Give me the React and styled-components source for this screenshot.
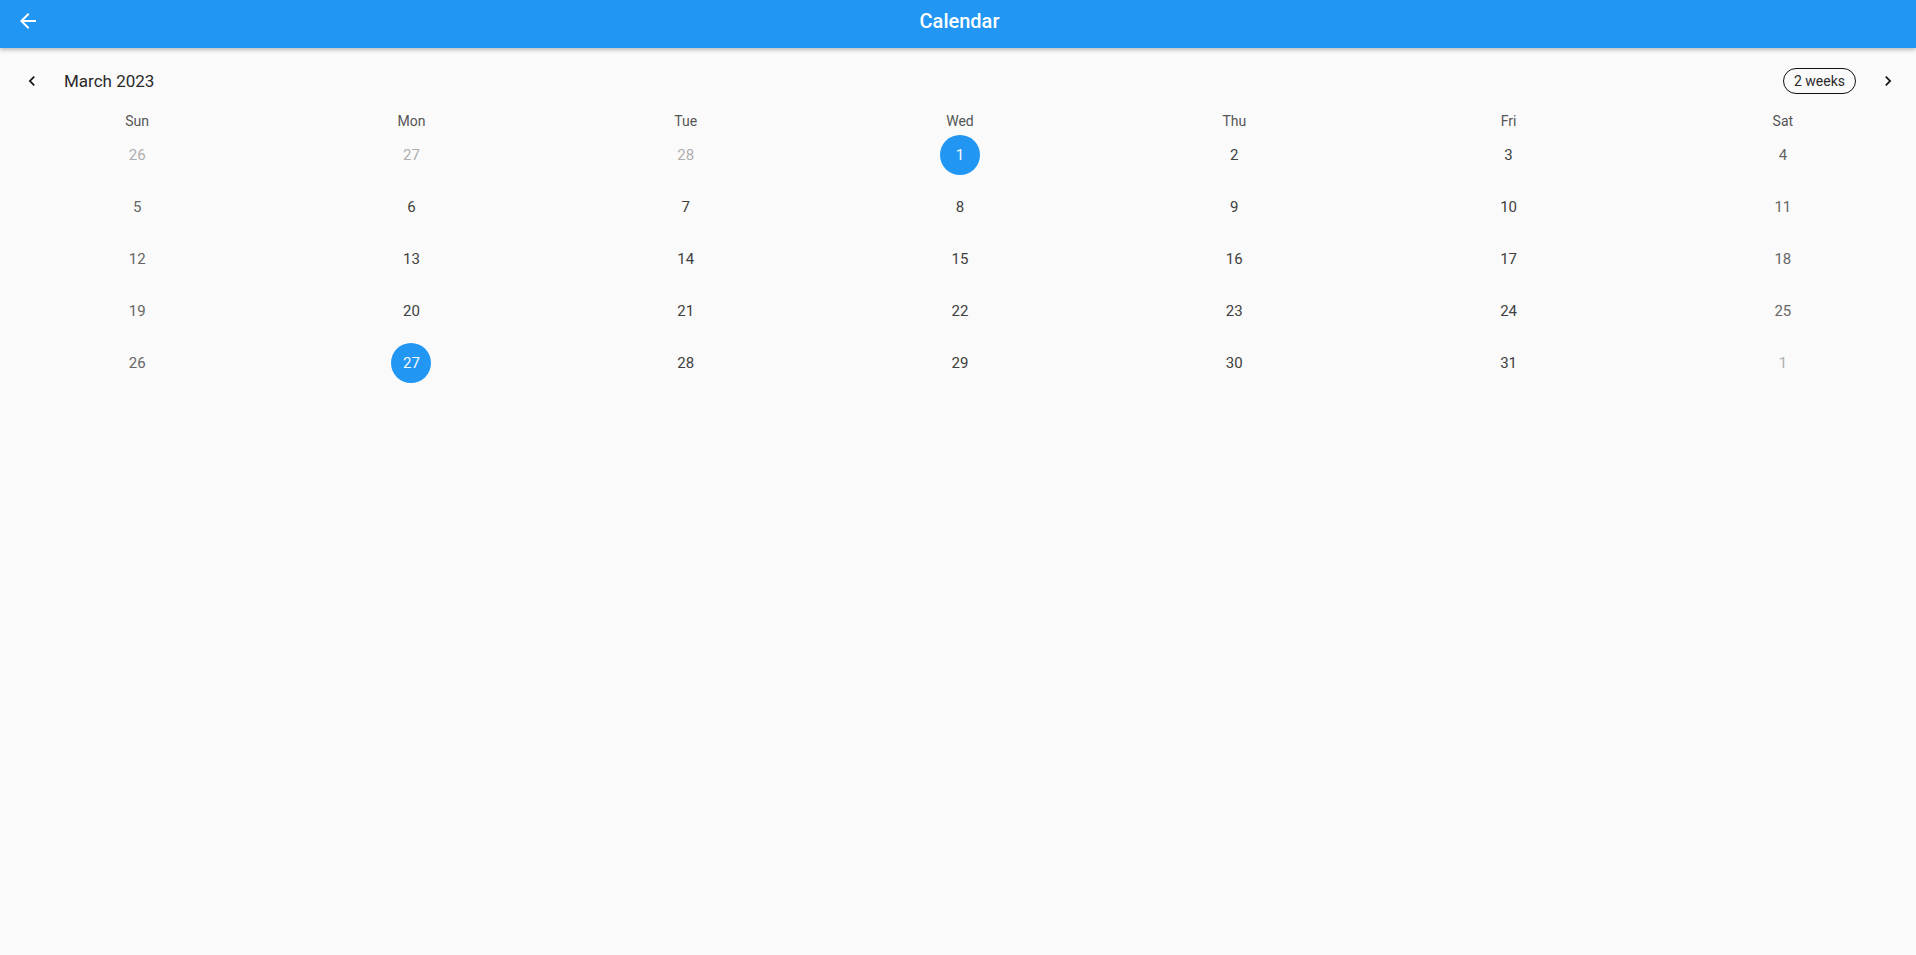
import React from "react";
import styled, { createGlobalStyle } from "styled-components";

const GlobalStyle = createGlobalStyle`
    html, body {
        margin: 0;
        padding: 0;
        background: #fafafa;
        font-family: Roboto, "Noto Sans", Arial, sans-serif;
    }
`;

const DOW = ["Sun", "Mon", "Tue", "Wed", "Thu", "Fri", "Sat"];

function buildDays() {
    const days = [];
    [26, 27, 28].forEach((d) => days.push({ d, outside: true }));
    for (let d = 1; d <= 31; d++) days.push({ d });
    days.push({ d: 1, outside: true });
    return days;
}

const ArrowBack = () => (
    <svg width="24" height="24" viewBox="0 0 24 24" fill="#fff">
        <path d="M20 11H7.83l5.59-5.59L12 4l-8 8 8 8 1.41-1.41L7.83 13H20v-2z" />
    </svg>
);

const Chevron = ({ dir }) => (
    <svg width="20" height="20" viewBox="0 0 24 24" fill="#111">
        {dir === "left" ? (
            <path d="M15.41 7.41L14 6l-6 6 6 6 1.41-1.41L10.83 12z" />
        ) : (
            <path d="M8.59 16.59L10 18l6-6-6-6-1.41 1.41L13.17 12z" />
        )}
    </svg>
);

export default function App() {
    const days = buildDays();
    return (
        <Page>
            <GlobalStyle />
            <AppBar>
                <BackButton>
                    <ArrowBack />
                </BackButton>
                <AppTitle>Calendar</AppTitle>
            </AppBar>
            <Header>
                <IconButton>
                    <Chevron dir="left" />
                </IconButton>
                <MonthTitle>March 2023</MonthTitle>
                <FormatButton>2 weeks</FormatButton>
                <IconButton>
                    <Chevron dir="right" />
                </IconButton>
            </Header>
            <Grid>
                {DOW.map((w) => (
                    <DowCell key={w}>{w}</DowCell>
                ))}
                {days.map((day, i) => {
                    const col = i % 7;
                    const selected =
                        !day.outside && (day.d === 1 || day.d === 27);
                    return (
                        <DayCell key={i}>
                            <DayMark
                                $selected={selected}
                                $outside={day.outside}
                                $weekend={col === 0 || col === 6}
                            >
                                {day.d}
                            </DayMark>
                        </DayCell>
                    );
                })}
            </Grid>
        </Page>
    );
}

const Page = styled.div`
    width: 100%;
    min-height: 100vh;
    background: #fafafa;
    overflow: hidden;
`;

const AppBar = styled.div`
    position: relative;
    height: 48px;
    background: #2196f3;
    box-shadow: 0 2px 4px rgba(0, 0, 0, 0.25);
    display: flex;
    align-items: center;
    justify-content: center;
    padding-bottom: 6px;
    box-sizing: border-box;
`;

const BackButton = styled.div`
    position: absolute;
    left: 16px;
    top: 9px;
    width: 24px;
    height: 24px;
    display: flex;
`;

const AppTitle = styled.div`
    color: #fff;
    font-size: 20px;
    font-weight: 500;
    margin-left: 3px;
`;

const Header = styled.div`
    height: 65px;
    padding-top: 1px;
    box-sizing: border-box;
    display: flex;
    align-items: center;
    padding-left: 22px;
    padding-right: 18px;
`;

const IconButton = styled.div`
    width: 20px;
    height: 20px;
    display: flex;
    align-items: center;
    justify-content: center;
`;

const MonthTitle = styled.div`
    flex: 1;
    margin-left: 22px;
    font-size: 17px;
    color: #2a2a2a;
`;

const FormatButton = styled.div`
    height: 26px;
    width: 73px;
    box-sizing: border-box;
    border: 1px solid #111;
    border-radius: 13px;
    display: flex;
    align-items: center;
    justify-content: center;
    font-size: 14px;
    color: #2a2a2a;
    margin-right: 22px;
`;

const Grid = styled.div`
    width: 1920px;
    display: grid;
    grid-template-columns: repeat(7, 1fr);
    grid-auto-rows: 52px;
    grid-template-rows: 16px;
`;

const DowCell = styled.div`
    display: flex;
    align-items: center;
    justify-content: center;
    font-size: 14px;
    color: #555;
`;

const DayCell = styled.div`
    display: flex;
    align-items: center;
    justify-content: center;
`;

const DayMark = styled.div`
    width: 40px;
    height: 40px;
    border-radius: 50%;
    display: flex;
    align-items: center;
    justify-content: center;
    font-size: 15px;
    background: ${(p) => (p.$selected ? "#2196f3" : "transparent")};
    color: ${(p) =>
        p.$selected
            ? "#fafafa"
            : p.$outside
            ? "#aeaeae"
            : p.$weekend
            ? "#666"
            : "#404040"};
`;
